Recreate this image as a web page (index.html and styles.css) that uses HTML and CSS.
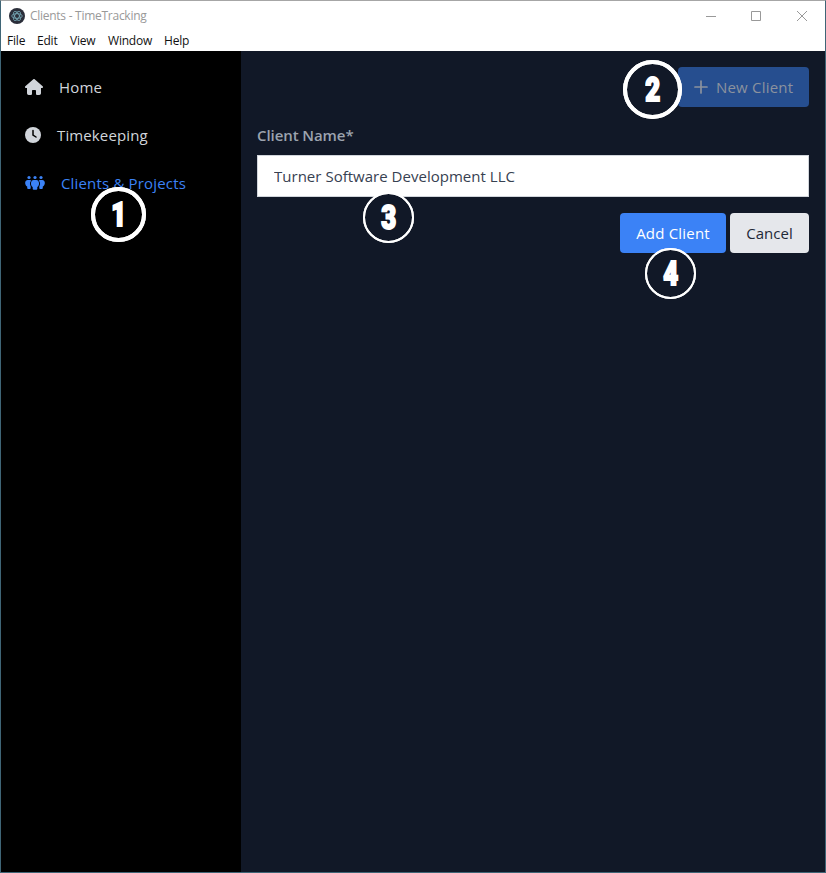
FILE: index.html
```
<!DOCTYPE html>
<html lang="en">
<head>
<meta charset="utf-8">
<title>Clients - TimeTracking</title>
<link rel="stylesheet" href="styles.css">
</head>
<body>
<div class="window">
  <header class="titlebar">
    <svg class="app-icon" viewBox="0 0 16 16"><circle cx="8" cy="8" r="8" fill="#2b2e3a"/><g fill="none" stroke="#9feaf9" stroke-width=".7" opacity=".75"><ellipse cx="8" cy="8" rx="5.200" ry="2.300"/><ellipse cx="8" cy="8" rx="5.200" ry="2.300" transform="rotate(60 8 8)"/><ellipse cx="8" cy="8" rx="5.200" ry="2.300" transform="rotate(120 8 8)"/></g></svg>
    <span class="title">Clients - TimeTracking</span>
    <svg class="controls" viewBox="0 0 102 12" fill="none" stroke="#999"><path d="M0 6.500H10M45.500 1.500H54.500V10.500H45.500ZM91 1L101 11M101 1L91 11"/></svg>
  </header>
  <nav class="menu"><span class="m-file">File</span><span class="m-edit">Edit</span><span class="m-view">View</span><span class="m-window">Window</span><span class="m-help">Help</span></nav>
  <div class="body">
    <aside class="sidebar">
      <a class="item home"><svg width="18" height="16" viewBox="0 0 576 512"><path fill="currentColor" d="M575.8 255.500c0 18-15 32.100-32 32.100h-32l.7 160.200c0 35-22 64.200-56 64.200H392c-22 0-40-18-40-40v-88c0-18-14-32-32-32h-64c-18 0-32 14-32 32v88c0 22-18 40-40 40h-64c-34 0-56-28-56-64V287.600H32c-18 0-32-14-32-32.100 0-9 3-17 10-24L266.400 8c7-7 15-8 22-8s15 2 21 7l255.400 224.500c8 7 12 15 11 24z"/></svg><span>Home</span></a>
      <a class="item time"><svg width="16" height="16" viewBox="0 0 16 16"><circle cx="8" cy="8" r="8" fill="currentColor"/><path d="M8 3.500V8L11 10" fill="none" stroke="#000" stroke-width="1.500" stroke-linecap="round"/></svg><span>Timekeeping</span></a>
      <a class="item clients active"><svg width="20" height="16" viewBox="0 0 20 16" fill="currentColor"><circle cx="4" cy="2.500" r="1.600"/><circle cx="10" cy="2.500" r="1.600"/><circle cx="16" cy="2.500" r="1.600"/><path d="M2.800 5H4.900C5.500 5 6 5.200 6.400 5.600C4.700 7 4.600 9.800 5.700 11.300V13Q5.700 14 4.800 14H3.200Q2.200 14 2.200 13V11.500C-.6 10-.6 5 2.800 5ZM17.200 5H15.100C14.500 5 14 5.200 13.600 5.600C15.300 7 15.400 9.800 14.300 11.300V13Q14.300 14 15.200 14H16.800Q17.800 14 17.800 13V11.500C20.600 10 20.600 5 17.200 5ZM8.800 5H11.200C14.800 5 14.800 10.600 12.300 12V13.700Q12.300 14.800 11.200 14.800H8.800Q7.700 14.800 7.700 13.700V12C5.200 10.600 5.200 5 8.800 5Z"/></svg><span>Clients &amp; Projects</span></a>
    </aside>
    <main class="content">
      <div class="toolbar"><button class="btn new" disabled><svg width="14" height="14" viewBox="0 0 14 14"><path d="M7 1V13M1 7H13" fill="none" stroke="currentColor" stroke-width="1.700" stroke-linecap="round"/></svg><span>New Client</span></button></div>
      <label class="label" for="name">Client Name*</label>
      <input class="field" id="name" value="Turner Software Development LLC">
      <div class="actions"><button class="btn add">Add Client</button><button class="btn cancel">Cancel</button></div>
    </main>
  </div>
  <div class="badge b1"><span>1</span></div>
  <div class="badge b2"><span>2</span></div>
  <div class="badge b3"><span>3</span></div>
  <div class="badge b4"><span>4</span></div>
</div>
</body>
</html>
```
FILE: styles.css
```
* { box-sizing: border-box; }
body { margin: 0; font-family: "Open Sans", "Noto Sans", sans-serif; }
.window { position: relative; display: flex; flex-direction: column; width: 826px; height: 873px; overflow: hidden; background: #fff; border: 1px solid #3f6576; border-top-color: #a6a6a6; }
.titlebar { display: flex; align-items: center; height: 29px; padding: 0 17px 0 8px; }
.app-icon { width: 16px; height: 16px; }
.title { flex: 1; margin-left: 5px; font-size: 12px; line-height: 16px; color: #999; letter-spacing: -.27px; }
.controls { width: 102px; height: 12px; }
.menu { display: flex; height: 21px; padding-left: 6px; font-size: 12px; line-height: 21px; color: #111; letter-spacing: -.2px; }
.m-file { width: 30px; }
.m-edit { width: 33px; }
.m-view { width: 38px; }
.m-window { width: 56px; }
.body { display: flex; flex: 1; }
.sidebar { display: flex; flex-direction: column; width: 240px; padding-top: 12px; background: #000; }
.item { display: flex; align-items: center; gap: 16px; height: 48px; padding-left: 24px; color: #d1d5db; font-size: 15px; }
.home span { letter-spacing: .15px; }
.time span { letter-spacing: .12px; }
.clients span { letter-spacing: .17px; }
.active { color: #3b82f6; }
.content { flex: 1; padding: 16px; background: #111827; }
.toolbar { display: flex; justify-content: flex-end; }
.btn { height: 40px; padding: 0; border: 0; border-radius: 4px; font: 15px "Open Sans", sans-serif; letter-spacing: .2px; }
.new { display: flex; align-items: center; gap: 8px; width: 131px; padding-left: 16px; background: #264e8f; color: #8b929e; }
.label { display: block; height: 48px; padding-top: 16px; font-size: 15px; font-weight: 600; line-height: 24px; color: #9ca3af; letter-spacing: -.08px; }
.field { display: block; width: 100%; height: 42px; padding: 0 16px; border: 1px solid #d1d5db; border-radius: 0; outline: 0; background: #fff; color: #374151; font: 15px "Open Sans", sans-serif; letter-spacing: .02px; }
.actions { display: flex; justify-content: flex-end; gap: 4px; margin-top: 16px; }
.add { width: 106px; background: #3b82f6; color: #fff; }
.cancel { width: 79px; background: #e5e7eb; color: #1f2937; letter-spacing: 0; }
.badge { position: absolute; display: flex; align-items: center; justify-content: center; width: 51px; height: 51px; border: 2.500px solid #fff; border-radius: 50%; background: #111827; color: #fff; font: 900 34px/35px Roboto, sans-serif; }
.badge::before { content: ""; position: absolute; inset: -2px; border: 2.500px solid #fff; border-radius: 50%; }
.badge span { transform: scaleX(.76); -webkit-text-stroke: 2px #fff; }
.b1 { left: 90px; top: 186px; width: 55px; height: 55px; border-width: 4px; background: #000; }
.b2 { left: 622px; top: 59px; width: 59px; height: 59px; border-width: 4px; }
.b1::before, .b2::before { inset: -4px; border-width: 4px; }
.b3 { left: 362px; top: 191px; }
.b4 { left: 644px; top: 247px; }
```
